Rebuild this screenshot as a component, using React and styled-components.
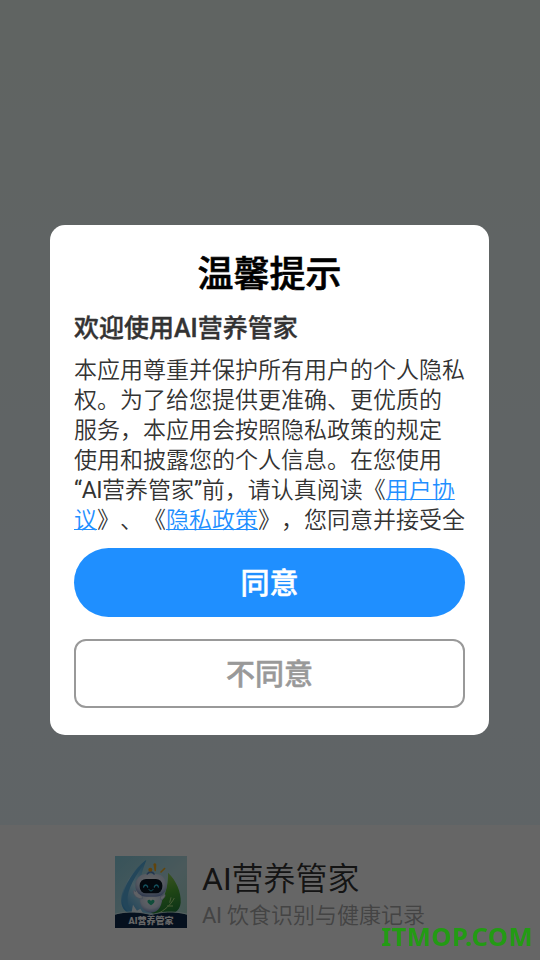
import React, { useState } from "react";
import styled, { createGlobalStyle } from "styled-components";

function AppLogo() {
  return (
    <LogoSvg viewBox="0 0 216 216">
      <defs>
        <linearGradient id="sky" x1="0" y1="0" x2="1" y2="1">
          <stop offset="0" stopColor="#8bd0e2" />
          <stop offset="0.55" stopColor="#b9dfe4" />
          <stop offset="1" stopColor="#a5d8c6" />
        </linearGradient>
        <linearGradient id="drop" x1="0.8" y1="0" x2="0.2" y2="1">
          <stop offset="0" stopColor="#43a7dc" />
          <stop offset="0.5" stopColor="#b5e6f7" />
          <stop offset="1" stopColor="#3b9ddb" />
        </linearGradient>
        <linearGradient id="leaf" x1="0.3" y1="0" x2="0.5" y2="1">
          <stop offset="0" stopColor="#9bd35c" />
          <stop offset="0.5" stopColor="#4fae35" />
          <stop offset="1" stopColor="#1f7f3a" />
        </linearGradient>
        <radialGradient id="body" cx="0.5" cy="0.35" r="0.65">
          <stop offset="0" stopColor="#ffffff" />
          <stop offset="0.65" stopColor="#d5e0f3" />
          <stop offset="1" stopColor="#7f95c8" />
        </radialGradient>
      </defs>
      <rect width="216" height="216" fill="url(#sky)" />
      <path
        d="M94 12C62 34 24 84 19 126c-3 24 8 44 35 52l58-6-36-60c-6-30 6-70 18-100z"
        fill="url(#drop)"
      />
      <path
        d="M94 12C64 58 34 98 38 138c2 18 10 28 22 34-24-2-38-18-38-44C26 88 60 38 94 12z"
        fill="#58aee0"
      />
      <path d="M48 178l6-32 12 18 10-6 12 20z" fill="#e9f8ff" />
      <path
        d="M159 50c24 22 40 58 38 90-2 26-24 38-50 38-20 0-36-4-40-10 30-12 54-62 52-118z"
        fill="url(#leaf)"
      />
      <path
        d="M178 126c-12 22-28 36-52 48M164 140l4-16M156 150l18 0"
        fill="none"
        stroke="#b9e88c"
        strokeWidth="3"
      />
      <path
        d="M74 112c-4 34 10 58 34 58s36-24 34-56z"
        fill="url(#body)"
      />
      <path
        d="M82 128c-12 2-26-8-27-20-1-7 5-6 6 0l4-8c4-2 6 4 4 10l12 4zM136 120c6 2 10-2 12-6 6 4 0 14-10 18z"
        fill="#edf3fc"
        stroke="#a6b8db"
        strokeWidth="2"
      />
      <rect x="61" y="54" width="94" height="68" rx="33" fill="url(#body)" />
      <rect x="74" y="69" width="68" height="43" rx="19" fill="#081525" />
      <path
        d="M86 93c1-8 10-8 12 0M118 93c2-8 11-8 12 0"
        fill="none"
        stroke="#35d6f7"
        strokeWidth="4"
        strokeLinecap="round"
      />
      <path
        d="M102 101c3 5 9 5 12 0"
        fill="none"
        stroke="#35d6f7"
        strokeWidth="3"
        strokeLinecap="round"
      />
      <path
        d="M108 148c-14-9-12-16-6-17 3 0 5 2 6 4 1-2 3-4 6-4 6 1 8 8-6 17z"
        fill="#28bf91"
      />
      <path
        d="M97 54c4-8 16-8 20 0M107 48v-6"
        fill="none"
        stroke="#5683c4"
        strokeWidth="5"
        strokeLinecap="round"
      />
      <circle cx="106" cy="41" r="6" fill="#f0a51f" />
      <path
        d="M115 24c3-4 8-3 9 2l-1 18c-2 3-4 2-5-1zM135 48l12-12c4-2 6 1 3 4l-12 11z"
        fill="#f3ac20"
      />
      <path
        d="M0 176c42-12 78-8 108 0 30-8 66-12 108 0v40H0z"
        fill="#0d294b"
      />
      <path
        d="M0 174c42-10 78-6 108 2 30-8 66-12 108-2"
        fill="none"
        stroke="#dff4f5"
        strokeWidth="2.5"
      />
      <LogoText x="108" y="203" textAnchor="middle">
        AI营养管家
      </LogoText>
    </LogoSvg>
  );
}

function PrivacyDialog({ onClose }) {
  return (
    <Overlay>
      <Dialog>
        <DialogTitle>温馨提示</DialogTitle>
        <Welcome>欢迎使用AI营养管家</Welcome>
        <Content>
          本应用尊重并保护所有用户的个人隐私权。为了给您提供更准确、更优质的
          <br />
          服务，本应用会按照隐私政策的规定
          <br />
          使用和披露您的个人信息。在您使用
          <br />
          <Latin $spacing="-0.45px">“AI</Latin>营养管家
          <Latin $spacing="-0.45px">”</Latin>前，请认真阅读《
          <Link>用户协议</Link>》、《<Link>隐私政策</Link>》，您同意并接受全
        </Content>
        <AgreeBtn onClick={onClose}>同意</AgreeBtn>
        <RefuseBtn onClick={onClose}>不同意</RefuseBtn>
      </Dialog>
    </Overlay>
  );
}

function App() {
  const [open, setOpen] = useState(true);

  return (
    <>
      <GlobalStyle />
      <Splash>
        <Footer>
          <AppLogo />
          <FooterText>
            <AppName>
              <Latin>AI</Latin>营养管家
            </AppName>
            <Slogan>
              <Latin $spacing="-0.3px">AI</Latin> 饮食识别与健康记录
            </Slogan>
          </FooterText>
        </Footer>
      </Splash>
      {open && <PrivacyDialog onClose={() => setOpen(false)} />}
      <Watermark>ITMOP.COM</Watermark>
    </>
  );
}

const GlobalStyle = createGlobalStyle`
  * {
    box-sizing: border-box;
  }

  body {
    margin: 0;
    overflow: hidden;
    font-family: Roboto, "Noto Sans CJK SC", sans-serif;
    font-weight: 350;
    text-spacing-trim: space-all;
  }
`;

const Splash = styled.div`
  height: 960px;
  display: flex;
  flex-direction: column;
  justify-content: flex-end;
  background: linear-gradient(#f0faf5, #f0faff 600px, #edfaff);
`;

const Footer = styled.div`
  height: 135px;
  display: flex;
  gap: 15px;
  padding: 31px 0 0 115px;
  background: #fff;
`;

const LogoSvg = styled.svg`
  width: 72px;
  height: 72px;
  flex-shrink: 0;
`;

const LogoText = styled.text`
  font-size: 27px;
  font-weight: 900;
  fill: #fff;
`;

const FooterText = styled.div`
  display: flex;
  flex-direction: column;
  white-space: nowrap;
`;

// latin glyphs look too thin at the weight used for the chinese text
const Latin = styled.span`
  font-weight: 400;
  letter-spacing: ${(props) => props.$spacing || "normal"};
`;

const AppName = styled.div`
  font-size: 32px;
  line-height: 46px;
  color: #333;
`;

const Slogan = styled.div`
  font-size: 22px;
  line-height: 28px;
  color: #aaa;
`;

const Overlay = styled.div`
  position: fixed;
  inset: 0;
  display: flex;
  align-items: center;
  justify-content: center;
  padding-right: 1px;
  background: rgba(0, 0, 0, 0.6);
`;

const Dialog = styled.div`
  width: 439px;
  height: 510px;
  display: flex;
  flex-direction: column;
  padding: 25px 24px 27px;
  border-radius: 15px;
  background: #fff;
`;

const DialogTitle = styled.div`
  font-size: 36px;
  line-height: 50px;
  font-weight: 500;
  text-align: center;
  color: #000;
  -webkit-text-stroke: 0.6px;
`;

const Welcome = styled.div`
  margin-top: 12px;
  font-size: 25px;
  line-height: 34px;
  font-weight: 500;
  color: #333;
  -webkit-text-stroke: 0.4px;
`;

const Content = styled.div`
  height: 180px;
  margin-top: 10px;
  overflow: hidden;
  font-size: 23px;
  line-height: 30px;
  color: #333;
`;

const Link = styled.span`
  color: #1f8fff;
  text-decoration: underline 1px;
  text-underline-offset: 1px;
  cursor: pointer;
`;

const Button = styled.button`
  width: 100%;
  height: 69px;
  flex-shrink: 0;
  padding: 0 0 4px;
  font-family: inherit;
  font-size: 29px;
  font-weight: 500;
  -webkit-text-stroke: 0.5px;
  cursor: pointer;
`;

const AgreeBtn = styled(Button)`
  margin-top: 12px;
  border: none;
  border-radius: 35px;
  background: #1f8fff;
  color: #fff;
`;

const RefuseBtn = styled(Button)`
  margin-top: 22px;
  border: 2px solid #999;
  border-radius: 12px;
  background: #fff;
  color: #999;
`;

const Watermark = styled.div`
  position: fixed;
  right: 7px;
  bottom: 6px;
  font-family: "Noto Sans", sans-serif;
  font-size: 25.5px;
  line-height: 36px;
  font-weight: 700;
  letter-spacing: 0.5px;
  color: #239b14;
`;

export default App;
